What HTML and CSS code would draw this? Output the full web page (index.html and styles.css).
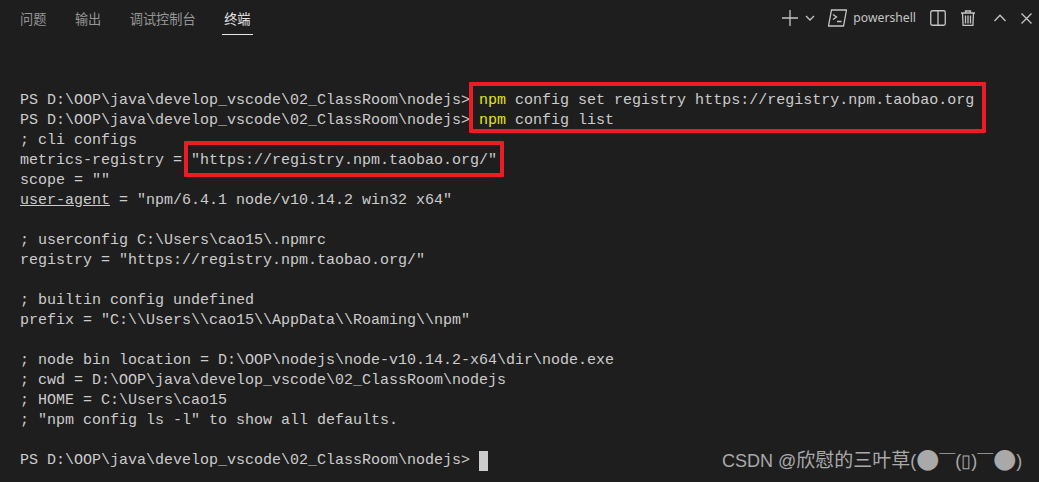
FILE: index.html
```html
<!DOCTYPE html>
<html lang="zh">
<head>
<meta charset="utf-8">
<title>终端</title>
<link rel="stylesheet" href="styles.css">
</head>
<body>
<div class="panel">
  <header class="bar">
    <nav class="tabs">
      <span class="tab">问题</span>
      <span class="tab">输出</span>
      <span class="tab">调试控制台</span>
      <span class="tab active">终端</span>
    </nav>
    <div class="actions">
      <svg class="ic-plus" width="16" height="16" viewBox="0 0 16 16"><path d="M8 0v16M0 8h16" /></svg>
      <svg class="ic-chev" width="10" height="10" viewBox="0 0 10 10"><path d="M1 3l4 4 4-4" /></svg>
      <svg class="ic-term" width="19" height="18" viewBox="0 0 19 18"><path d="M3.500 1h15L15.500 17H.5z" /><path d="M5 5.500l3.500 2.500L5 10.500M9 12.500h4.500" /></svg>
      <span class="shell">powershell</span>
      <svg class="ic-split" width="16" height="16" viewBox="0 0 16 16"><rect x="0.750" y="0.750" width="14.500" height="14.500" rx="1.500"/><path d="M8 1v14"/></svg>
      <svg class="ic-trash" width="14" height="16" viewBox="0 0 14 16"><path d="M0 3h14M4.500 3V1h5v2M1.500 3l.6 12.300h9.800L12.500 3M4.500 5.500v8M7 5.500v8M9.500 5.500v8"/></svg>
      <svg class="ic-up" width="12" height="8" viewBox="0 0 12 8"><path d="M.5 7L6 1.200 11.500 7"/></svg>
      <svg class="ic-close" width="11" height="11" viewBox="0 0 11 11"><path d="M.5.5l10 10M10.500.5L.5 10.500"/></svg>
    </div>
  </header>
  <pre class="term"><code>PS D:\OOP\java\develop_vscode\02_ClassRoom\nodejs&gt; <b>npm</b> config set registry https://registry.npm.taobao.org
PS D:\OOP\java\develop_vscode\02_ClassRoom\nodejs&gt; <b>npm</b> config list
; cli configs
metrics-registry = "https://registry.npm.taobao.org/"
scope = ""
<u>user-agent</u> = "npm/6.4.1 node/v10.14.2 win32 x64"

; userconfig C:\Users\cao15\.npmrc
registry = "https://registry.npm.taobao.org/"

; builtin config undefined
prefix = "C:\\Users\\cao15\\AppData\\Roaming\\npm"

; node bin location = D:\OOP\nodejs\node-v10.14.2-x64\dir\node.exe
; cwd = D:\OOP\java\develop_vscode\02_ClassRoom\nodejs
; HOME = C:\Users\cao15
; "npm config ls -l" to show all defaults.

PS D:\OOP\java\develop_vscode\02_ClassRoom\nodejs&gt; <i class="cursor"></i></code></pre>
  <div class="mark mark-cmd"></div>
  <div class="mark mark-url"></div>
  <div class="watermark">CSDN @<span class="cn">欣慰的三叶草</span>(<span class="dot">●</span><span class="wide">￣</span>(▯)<span class="wide">￣</span><span class="dot">●</span>)</div>
</div>
</body>
</html>
```
FILE: styles.css
```css
html, body {
  margin: 0;
  padding: 0;
  background: #1e1e1e;
}
.panel {
  position: relative;
  width: 1039px;
  height: 482px;
  overflow: hidden;
  background: #1e1e1e;
  color: #cccccc;
}
.bar {
  display: flex;
  justify-content: space-between;
  align-items: center;
  height: 36px;
  padding: 0 0 0 20px;
}
.tabs {
  display: flex;
  gap: 28.500px;
  height: 36px;
  align-items: stretch;
}
.tab {
  display: flex;
  align-items: center;
  height: 36px;
  padding-top: 1px;
  box-sizing: border-box;
  font: 13.200px/1 "Noto Sans CJK SC", sans-serif;
  color: #969696;
}
.tab.active {
  color: #e7e7e7;
  position: relative;
}
.tab.active::after {
  content: "";
  position: absolute;
  left: -2px;
  right: -2px;
  top: 34px;
  height: 1px;
  background: #e7e7e7;
}
.actions {
  display: flex;
  align-items: center;
  height: 36px;
  padding: 0 7px 0 0;
}
.actions svg {
  display: block;
  flex: none;
  fill: none;
  stroke: #c5c5c5;
  stroke-width: 1.300;
}
.ic-plus { margin-right: 7px; }
.ic-chev { margin-right: 13px; }
.ic-term { margin-right: 6px; }
.shell {
  font: 12.200px/1 "Noto Sans", "Open Sans", sans-serif;
  color: #c5c5c5;
  margin-right: 14px;
}
.ic-split { margin-right: 15px; }
.ic-trash { margin-right: 19px; }
.ic-up { margin-right: 15px; }
.term {
  margin: 55px 0 0;
  padding: 0 0 0 20px;
  font: 15px/20px "Liberation Mono", monospace;
  color: #cccccc;
}
.term code {
  font: inherit;
}
.term b {
  font-weight: normal;
  color: #e5e510;
}
.cursor {
  display: inline-block;
  width: 9px;
  height: 20px;
  vertical-align: top;
  background: #cccccc;
}
.mark {
  position: absolute;
  box-sizing: border-box;
  border: 4px solid #ed1c24;
  border-radius: 1px;
}
.mark-cmd {
  left: 469px;
  top: 82px;
  width: 517px;
  height: 51px;
}
.mark-url {
  left: 184px;
  top: 141px;
  width: 320px;
  height: 36px;
}
.watermark {
  position: absolute;
  left: 722px;
  top: 449px;
  font: 18px/24px "Liberation Sans", "Noto Sans CJK SC", sans-serif;
  color: #a9a9a9;
  white-space: nowrap;
}
.cn {
  font: 19px/1 "Noto Sans CJK SC", sans-serif;
}
.wide {
  font: 16px/1 "Noto Sans CJK SC", sans-serif;
}
.dot {
  font: 23px/0 "Noto Sans CJK SC", sans-serif;
  vertical-align: -2px;
}
```
